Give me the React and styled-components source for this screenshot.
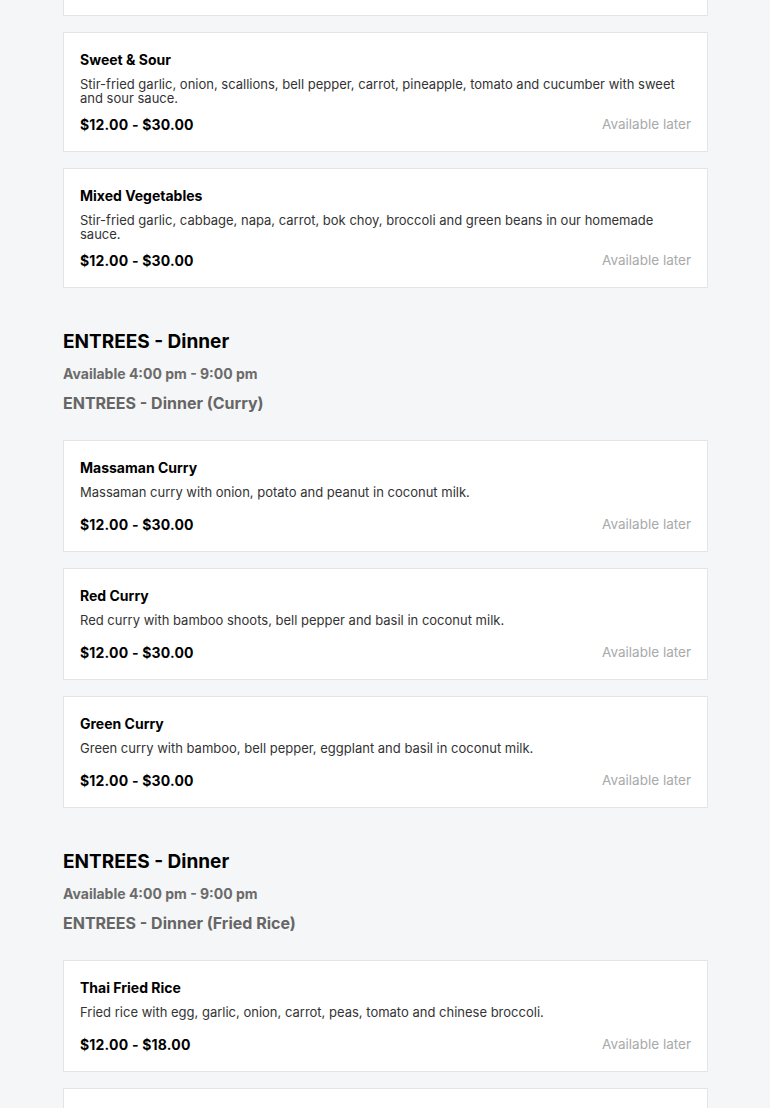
import React from "react";
import styled, { createGlobalStyle } from "styled-components";

const GlobalStyle = createGlobalStyle`
  html, body {
    margin: 0;
    padding: 0;
    background-color: #f5f6f7;
    font-family: Inter, "Noto Sans", sans-serif;
  }
`;

const Page = styled.div`
  width: 645px;
  padding: 0 0 0 63px;
  background-color: #f5f6f7;
  min-height: 1108px;
`;

const Section = styled.section`
  padding-top: ${(p) => (p.$first ? "0" : "42px")};
`;

const Heading = styled.h2`
  margin: 0;
  font-size: 19px;
  line-height: 24px;
  font-weight: 700;
  color: #000;
`;

const Hours = styled.div`
  margin-top: 10px;
  font-size: 14px;
  line-height: 20px;
  font-weight: 700;
  color: #6b6b6b;
`;

const SubHeading = styled.h3`
  margin: 8px 0 0;
  font-size: 16px;
  line-height: 22px;
  font-weight: 700;
  color: #666;
`;

const CardList = styled.div`
  display: flex;
  flex-direction: column;
  gap: 16px;
  margin-top: ${(p) => (p.$flush ? "0" : "26px")};
`;

const Card = styled.div`
  background-color: #fff;
  border: 1px solid #e3e4e6;
  padding: 17px 16px 17px;
`;

const CardStub = styled.div`
  height: 15px;
  background-color: #fff;
  border: 1px solid #e3e4e6;
  border-top: none;
`;

const ItemName = styled.div`
  font-size: 14px;
  line-height: 20px;
  font-weight: 700;
  color: #000;
`;

const Description = styled.p`
  margin: 7px 0 0;
  min-height: 20px;
  font-size: 13px;
  line-height: 14px;
  color: #333;
`;

const PriceRow = styled.div`
  display: flex;
  justify-content: space-between;
  align-items: center;
  margin-top: 9px;
  height: 20px;
`;

const Price = styled.span`
  font-size: 14px;
  font-weight: 700;
  color: #000;
  letter-spacing: 0.2px;
`;

const Status = styled.span`
  font-size: 13.5px;
  color: #a9a9a9;
`;

const MenuItem = ({ name, description, price }) => (
  <Card>
    <ItemName>{name}</ItemName>
    <Description>{description}</Description>
    <PriceRow>
      <Price>{price}</Price>
      <Status>Available later</Status>
    </PriceRow>
  </Card>
);

const stirFry = [
  {
    name: "Sweet & Sour",
    description:
      "Stir-fried garlic, onion, scallions, bell pepper, carrot, pineapple, tomato and cucumber with sweet and sour sauce.",
    price: "$12.00 - $30.00",
  },
  {
    name: "Mixed Vegetables",
    description:
      "Stir-fried garlic, cabbage, napa, carrot, bok choy, broccoli and green beans in our homemade sauce.",
    price: "$12.00 - $30.00",
  },
];

const sections = [
  {
    title: "ENTREES - Dinner",
    hours: "Available 4:00 pm - 9:00 pm",
    sub: "ENTREES - Dinner (Curry)",
    items: [
      {
        name: "Massaman Curry",
        description: "Massaman curry with onion, potato and peanut in coconut milk.",
        price: "$12.00 - $30.00",
      },
      {
        name: "Red Curry",
        description: "Red curry with bamboo shoots, bell pepper and basil in coconut milk.",
        price: "$12.00 - $30.00",
      },
      {
        name: "Green Curry",
        description: "Green curry with bamboo, bell pepper, eggplant and basil in coconut milk.",
        price: "$12.00 - $30.00",
      },
    ],
  },
  {
    title: "ENTREES - Dinner",
    hours: "Available 4:00 pm - 9:00 pm",
    sub: "ENTREES - Dinner (Fried Rice)",
    items: [
      {
        name: "Thai Fried Rice",
        description: "Fried rice with egg, garlic, onion, carrot, peas, tomato and chinese broccoli.",
        price: "$12.00 - $18.00",
      },
      {
        name: "Pineapple Fried Rice",
        description: "Fried rice with egg, pineapple, onion, carrot, peas, cashew nut and raisins.",
        price: "$12.00 - $18.00",
      },
    ],
  },
];

export default function App() {
  return (
    <>
      <GlobalStyle />
      <Page>
        <Section $first>
          <CardList $flush>
            <CardStub />
            {stirFry.map((item) => (
              <MenuItem key={item.name} {...item} />
            ))}
          </CardList>
        </Section>
        {sections.map((s) => (
          <Section key={s.sub}>
            <Heading>{s.title}</Heading>
            <Hours>{s.hours}</Hours>
            <SubHeading>{s.sub}</SubHeading>
            <CardList>
              {s.items.map((item) => (
                <MenuItem key={item.name} {...item} />
              ))}
            </CardList>
          </Section>
        ))}
      </Page>
    </>
  );
}
